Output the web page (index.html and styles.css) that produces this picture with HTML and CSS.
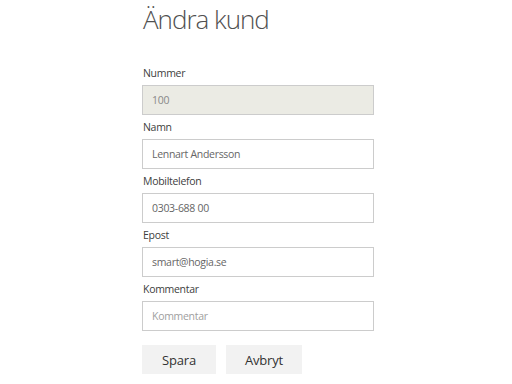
FILE: index.html
```html
<!DOCTYPE html>
<html lang="sv">
<head>
<meta charset="utf-8">
<title>Ändra kund</title>
<link rel="stylesheet" href="styles.css">
</head>
<body>
<main class="page">
  <h1 class="title">Ändra kund</h1>
  <form class="form">
    <div class="field">
      <label class="label">Nummer</label>
      <div class="input disabled">100</div>
    </div>
    <div class="field">
      <label class="label">Namn</label>
      <div class="input">Lennart Andersson</div>
    </div>
    <div class="field">
      <label class="label">Mobiltelefon</label>
      <div class="input">0303-688 00</div>
    </div>
    <div class="field">
      <label class="label">Epost</label>
      <div class="input">smart@hogia.se</div>
    </div>
    <div class="field">
      <label class="label">Kommentar</label>
      <div class="input placeholder">Kommentar</div>
    </div>
    <div class="actions">
      <button type="button" class="btn btn-save">Spara</button>
      <button type="button" class="btn btn-cancel">Avbryt</button>
    </div>
  </form>
</main>
</body>
</html>
```
FILE: styles.css
```css
html, body {
  margin: 0;
  padding: 0;
  background: #ffffff;
}
body {
  font-family: "Open Sans", "Noto Sans", sans-serif;
  color: #333333;
}
.page {
  padding-left: 142px;
  width: 232px;
}
.title {
  margin: 0;
  padding-left: 1px;
  height: 61px;
  font-size: 26px;
  font-weight: 300;
  line-height: 38px;
  color: #505050;
  letter-spacing: -1px;
}
.form {
  display: flex;
  flex-direction: column;
}
.field {
  display: flex;
  flex-direction: column;
}
.label {
  height: 24px;
  line-height: 24px;
  font-size: 10.5px;
  padding-left: 1px;
  color: #404040;
  letter-spacing: -0.3px;
}
.input {
  box-sizing: border-box;
  height: 30px;
  border: 1px solid #cccccc;
  padding: 0 9px;
  font-size: 10.5px;
  line-height: 28px;
  color: #666666;
  letter-spacing: -0.3px;
}
.input.disabled {
  background: #ebebe4;
  color: #888888;
}
.input.placeholder {
  color: #a0a0a0;
}
.actions {
  display: flex;
  gap: 10px;
  margin-top: 14px;
}
.btn {
  height: 29px;
  border: none;
  background: #f2f2f2;
  font-family: inherit;
  font-size: 13px;
  color: #333333;
  padding: 0;
  letter-spacing: -0.2px;
}
.btn-save { width: 74px; }
.btn-cancel { width: 76px; }
```
